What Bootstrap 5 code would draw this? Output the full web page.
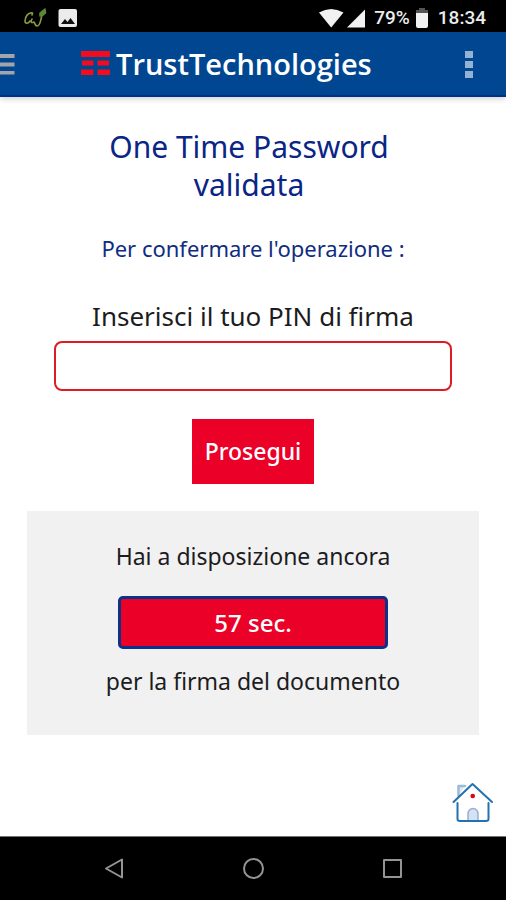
<!DOCTYPE html>
<html lang="it">
<head>
<meta charset="utf-8">
<meta name="viewport" content="width=device-width, initial-scale=1">
<title>TrustTechnologies</title>
<link href="https://cdn.jsdelivr.net/npm/bootstrap@5.3.0/dist/css/bootstrap.min.css" rel="stylesheet">
<style>
  body { font-family: "Noto Sans", "Open Sans", sans-serif; color: #1c1c1e; background: #fff; }
  .status-bar { height: 32px; padding: 3px 20px 0 24px; background: #000; color: #ececec; font: 500 19px/29px Roboto, sans-serif; }
  .app-bar { height: 65px; background: #004691; border-bottom: 2px solid #003087; box-shadow: 0 2px 6px rgba(0, 0, 0, .18); }
  .menu-btn, .more-btn, .key-btn { border: 0; padding: 0; background: none; line-height: 0; }
  .menu-btn { width: 81px; text-align: left; }
  .more-btn { margin-right: 31px; }
  .brand-name { margin-left: 6px; font-family: "Open Sans", "Noto Sans", sans-serif; font-size: 29px; font-weight: 600; line-height: 40px; color: #fff; }
  .screen-body { padding: 31px 27px 0; }
  .screen-title { padding-right: 8px; margin-bottom: 29px; font-size: 30px; line-height: 38px; font-weight: 400; color: #0a2585; }
  .intro { margin-bottom: 35px; font-size: 22px; line-height: 30px; color: #0f2d80; }
  .pin-form { padding: 0 27px; }
  .pin-label { margin-bottom: 7px; font-size: 26px; line-height: 36px; }
  .pin-input { height: 50px; border: 2px solid #de1c24; border-radius: 8px; font-size: 24px; }
  .submit-btn { margin-top: 28px; padding: 15px 13px; border: 0; border-radius: 0; background: #eb0028; color: #fff; font-size: 23px; line-height: 35px; font-weight: 500; }
  .timer-panel { margin-top: 27px; padding: 27px 20px 36px; background: #f1f1f1; font-size: 23px; line-height: 36px; }
  .timer-value { width: 270px; margin: 22px auto 14px; padding: 5px; border: 3px solid #0b3288; border-radius: 5px; background: #eb0028; color: #fff; font-size: 24px; line-height: 37px; font-weight: 500; }
  .home-bar { padding: 0 12px 12px; }
  .key-bar { height: 64px; padding: 0 103px; background: #000; border-top: 1px solid #6d7373; }
</style>
</head>
<body class="d-flex flex-column min-vh-100">
<div class="status-bar d-flex align-items-center justify-content-between">
  <div class="d-flex align-items-center">
    <svg width="24" height="20" viewBox="0 0 24 20" fill="none" stroke="#8a9d3d" stroke-width="1.600" stroke-linecap="round" stroke-linejoin="round" aria-hidden="true">
      <path d="M8 7L8.500 5C4 4 1 9 1 13C1 16 4 16 6 13M8 11C6 15 8 15 10 14C11 14 10 17 13 18C16 18 16.500 13 17.500 9"/>
      <path d="M16 5L21 1L21.500 5L18 8L16 8Z" fill="#5e8734" stroke="#5e8734"/>
    </svg>
    <svg class="ms-2" width="24" height="20" viewBox="0 0 24 20" aria-hidden="true">
      <rect x="2.500" y="1" width="18.500" height="18" rx="2" fill="#ebebeb"/>
      <path d="M5 16L9 11L11.500 14L14.500 10L19 16Z" fill="#111"/>
    </svg>
  </div>
  <div class="d-flex align-items-center">
    <svg width="48" height="20" viewBox="0 0 48 20" fill="#f1f1f1" aria-hidden="true">
      <path d="M1 4.500Q13 -2.500 25.500 4.500L13.200 19.500Z"/>
      <path d="M29 19.500L47 1.500V19.500Z"/>
    </svg>
    <span class="ms-2">79%</span>
    <svg class="mx-1" width="16" height="20" viewBox="0 0 16 20" aria-hidden="true">
      <path d="M5 0H11V2H14V6H2V2H5Z" fill="#555"/>
      <path d="M2 5H14V18Q14 20 12 20H4Q2 20 2 18Z" fill="#f1f1f1"/>
    </svg>
    <span class="ms-1">18:34</span>
  </div>
</div>
<header class="app-bar d-flex align-items-center">
  <button class="menu-btn" type="button" aria-label="Menu">
    <svg width="15" height="22" viewBox="0 0 15 22" fill="#a4a5a8" aria-hidden="true"><path d="M0 1h14.500v4H0zM0 9.500h14.500v4H0zM0 18h14.500v3.500H0z"/></svg>
  </button>
  <svg width="29" height="26" viewBox="0 0 29 26" fill="#f30c1e" aria-hidden="true">
    <path d="M0 0h29v6H0zM1 9.500h11.500v5H1zM16.500 9.500H28v5H16.500zM0 18.500h12.500v5.500H0zM16.500 18.500H29v5.500H16.500z"/>
  </svg>
  <div class="brand-name">TrustTechnologies</div>
  <button class="more-btn ms-auto" type="button" aria-label="Altre opzioni">
    <svg width="12" height="30" viewBox="0 0 12 30" fill="#94b3d3" aria-hidden="true"><path d="M2 2h8v7H2zM2 12h8v7H2zM2 22h8v7H2z"/></svg>
  </button>
</header>
<main class="flex-grow-1 d-flex flex-column">
  <div class="screen-body">
    <h1 class="screen-title text-center">One Time Password<br>validata</h1>
    <p class="intro text-center">Per confermare l'operazione :</p>
    <form class="pin-form text-center">
      <label class="pin-label d-block" for="pin">Inserisci il tuo PIN di firma</label>
      <input class="pin-input form-control" id="pin" type="password">
      <button class="submit-btn btn" type="button">Prosegui</button>
    </form>
    <section class="timer-panel text-center">
      <div>Hai a disposizione ancora</div>
      <div class="timer-value" role="timer">57 sec.</div>
      <div>per la firma del documento</div>
    </section>
  </div>
  <div class="home-bar d-flex justify-content-end mt-auto">
    <a href="#" aria-label="Home">
      <svg class="d-block" width="42" height="42" viewBox="0 0 42 42" fill="none" stroke-linecap="round" stroke-linejoin="round" aria-hidden="true">
        <path d="M6.500 14V4H13" stroke="#9dbbd7" stroke-width="2.500" fill="#dce8f4"/>
        <path d="M2 20L20.500 2L8 14.500Z" fill="#fff"/>
        <path d="M16 38V32A5 5.500 0 0 1 26 32V38" stroke="#9aaed0" stroke-width="1.500" fill="#d3e2f5"/>
        <path d="M1.500 20L20.500 2L40 20" stroke="#2371b0" stroke-width="2"/>
        <path d="M5.500 21V37Q5.500 39 8 39H34Q36.500 39 36.500 37V21" stroke="#2371b0" stroke-width="2"/>
        <circle cx="20.700" cy="14" r="2.300" fill="#d80712"/>
      </svg>
    </a>
  </div>
</main>
<nav class="key-bar d-flex align-items-center justify-content-between" aria-label="Sistema">
  <button class="key-btn" type="button" aria-label="Indietro">
    <svg width="22" height="24" viewBox="0 0 22 24" fill="none" stroke="#949494" stroke-width="2" stroke-linejoin="round" aria-hidden="true"><path d="M3 11.500L19 2.500V20.500Z"/></svg>
  </button>
  <button class="key-btn" type="button" aria-label="Home di sistema">
    <svg width="24" height="24" viewBox="0 0 24 24" fill="none" stroke="#949494" stroke-width="2" aria-hidden="true"><circle cx="12.500" cy="11.500" r="9.500"/></svg>
  </button>
  <button class="key-btn" type="button" aria-label="Recenti">
    <svg width="22" height="24" viewBox="0 0 22 24" fill="none" stroke="#949494" stroke-width="2" stroke-linejoin="round" aria-hidden="true"><rect x="3" y="3" width="17" height="17"/></svg>
  </button>
</nav>
<script src="https://cdn.jsdelivr.net/npm/bootstrap@5.3.0/dist/js/bootstrap.bundle.min.js"></script>
</body>
</html>
